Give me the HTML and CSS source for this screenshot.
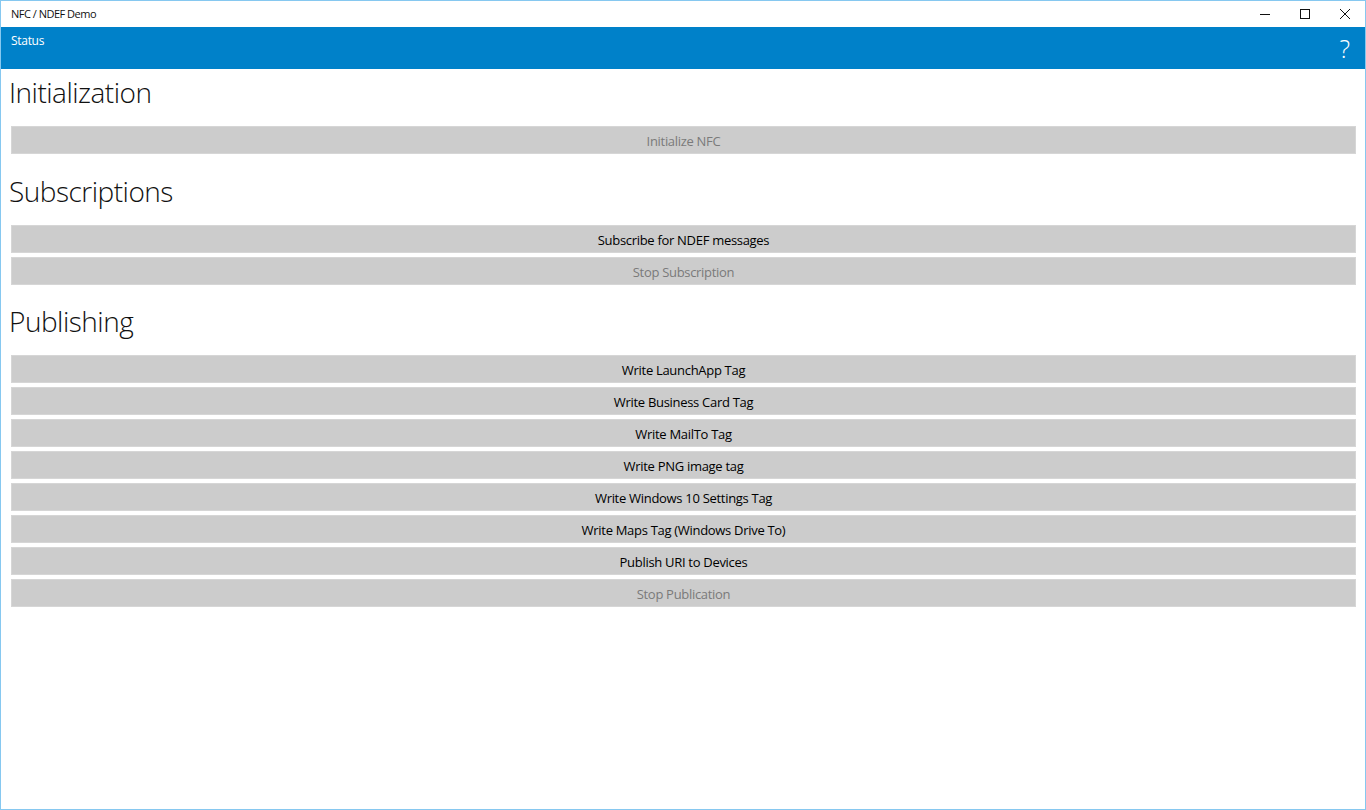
FILE: index.html
```html
<!DOCTYPE html>
<html lang="en">
<head>
<meta charset="utf-8">
<title>NFC / NDEF Demo</title>
<link rel="stylesheet" href="styles.css">
</head>
<body>
<div class="window">
  <header class="titlebar">
    <span class="title">NFC / NDEF Demo</span>
    <div class="caption-buttons">
      <span class="caption-btn">
        <svg width="10" height="10" viewBox="0 0 10 10"><path d="M0 5.5h10" stroke="#111" stroke-width="1"/></svg>
      </span>
      <span class="caption-btn">
        <svg width="10" height="10" viewBox="0 0 10 10"><rect x="0.5" y="0.5" width="9" height="9" fill="none" stroke="#111" stroke-width="1"/></svg>
      </span>
      <span class="caption-btn">
        <svg width="10" height="10" viewBox="0 0 10 10"><path d="M0 0L10 10M10 0L0 10" stroke="#111" stroke-width="1"/></svg>
      </span>
    </div>
  </header>

  <div class="statusbar">
    <span class="status-text">Status</span>
    <span class="help">?</span>
  </div>

  <main class="content">
    <section class="group">
      <h2 class="group-title">Initialization</h2>
      <div class="btn disabled">Initialize NFC</div>
    </section>

    <section class="group">
      <h2 class="group-title">Subscriptions</h2>
      <div class="btn">Subscribe for NDEF messages</div>
      <div class="btn disabled">Stop Subscription</div>
    </section>

    <section class="group">
      <h2 class="group-title">Publishing</h2>
      <div class="btn">Write LaunchApp Tag</div>
      <div class="btn">Write Business Card Tag</div>
      <div class="btn">Write MailTo Tag</div>
      <div class="btn">Write PNG image tag</div>
      <div class="btn">Write Windows 10 Settings Tag</div>
      <div class="btn">Write Maps Tag (Windows Drive To)</div>
      <div class="btn">Publish URI to Devices</div>
      <div class="btn disabled">Stop Publication</div>
    </section>
  </main>
</div>
</body>
</html>
```

FILE: styles.css
```css
* {
  box-sizing: border-box;
}

html, body {
  margin: 0;
  height: 100%;
  background: #ffffff;
}

body {
  font-family: "Open Sans", "Noto Sans", sans-serif;
  color: #000;
}

.window {
  height: 810px;
  border: 1px solid #86c8f0;
  display: flex;
  flex-direction: column;
  overflow: hidden;
}

.titlebar {
  height: 26px;
  display: flex;
  align-items: center;
  justify-content: space-between;
  padding-left: 10px;
}

.title {
  font-size: 11px;
  letter-spacing: -0.5px;
  color: #111;
  padding-bottom: 1px;
}

.caption-buttons {
  display: flex;
  align-self: stretch;
}

.caption-btn {
  width: 40px;
  display: flex;
  align-items: center;
  justify-content: center;
}

.caption-btn svg {
  display: block;
}

.statusbar {
  height: 42px;
  background: #0081c9;
  display: flex;
  justify-content: space-between;
  align-items: flex-start;
  padding: 4px 15px 0 10px;
}

.status-text {
  color: #fff;
  font-size: 12px;
  letter-spacing: -0.3px;
  line-height: 20px;
}

.help {
  color: #fff;
  font-size: 25px;
  font-weight: 300;
  line-height: 30px;
  padding-top: 2px;
}

.content {
  padding: 3px 9px 0 10px;
}

.group {
  margin-bottom: 17px;
}

.group + .group + .group .group-title {
  margin-top: -1px;
}

.group-title {
  margin: 0 0 14px -2px;
  height: 40px;
  font-size: 28px;
  letter-spacing: -0.5px;
  line-height: 40px;
  font-weight: 300;
  color: #111;
}

.btn {
  height: 28px;
  margin-bottom: 4px;
  padding-top: 1px;
  background: #cccccc;
  border: 1px solid #d6d6d6;
  display: flex;
  align-items: center;
  justify-content: center;
  font-size: 13px;
  letter-spacing: -0.3px;
  color: #000;
}

.btn.disabled {
  color: #7a7a7a;
}
```
